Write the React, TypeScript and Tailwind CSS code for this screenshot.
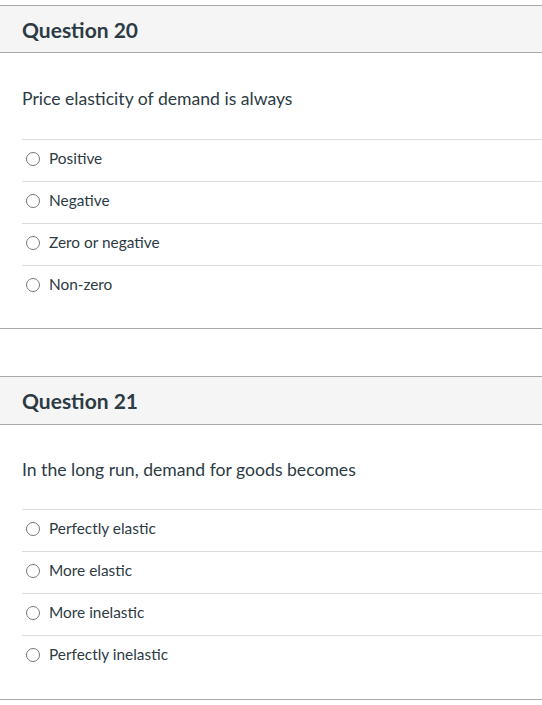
import React from "react";

type Q = { title: string; text: string; answers: string[]; headH: string; textH: string; pb: string };

const questions: Q[] = [
  {
    title: "Question 20",
    text: "Price elasticity of demand is always",
    answers: ["Positive", "Negative", "Zero or negative", "Non-zero"],
    headH: "h-[47px]",
    textH: "h-[86px]",
    pb: "pb-[21px]",
  },
  {
    title: "Question 21",
    text: "In the long run, demand for goods becomes",
    answers: ["Perfectly elastic", "More elastic", "More inelastic", "Perfectly inelastic"],
    headH: "h-[48px]",
    textH: "h-[84px]",
    pb: "pb-[22px]",
  },
];

function Card({ q }: { q: Q }) {
  return (
    <div className="border-t border-b border-[#a9a9a9]">
      <div className={`${q.headH} bg-[#f5f5f5] border-b border-[#a9a9a9] flex items-center pl-[22px]`}>
        <h2 className="text-[21px] font-bold text-[#2d3b45] leading-none">{q.title}</h2>
      </div>
      <div className={`${q.textH} flex items-center pl-[22px] pt-[6px]`}>
        <p className="text-[17.6px] text-[#2d3b45] leading-none">{q.text}</p>
      </div>
      <div className={`pl-[22px] ${q.pb}`}>
        {q.answers.map((a) => (
          <div key={a} className="h-[42px] border-t border-[#dcdcdc] flex items-center pb-[4px]">
            <span className="ml-[4px] w-[14px] h-[14px] rounded-full border border-[#7a7a7a] bg-white shrink-0" />
            <span className="ml-[9px] text-[15.4px] text-[#2d3b45] leading-none">{a}</span>
          </div>
        ))}
      </div>
    </div>
  );
}

export default function App() {
  return (
    <div
      className="w-[542px] h-[705px] bg-white pt-[5px] overflow-hidden"
      style={{ fontFamily: "Lato, 'Noto Sans', sans-serif" }}
    >
      <div className="flex flex-col gap-[47px]">
        {questions.map((q) => (
          <Card key={q.title} q={q} />
        ))}
      </div>
    </div>
  );
}
